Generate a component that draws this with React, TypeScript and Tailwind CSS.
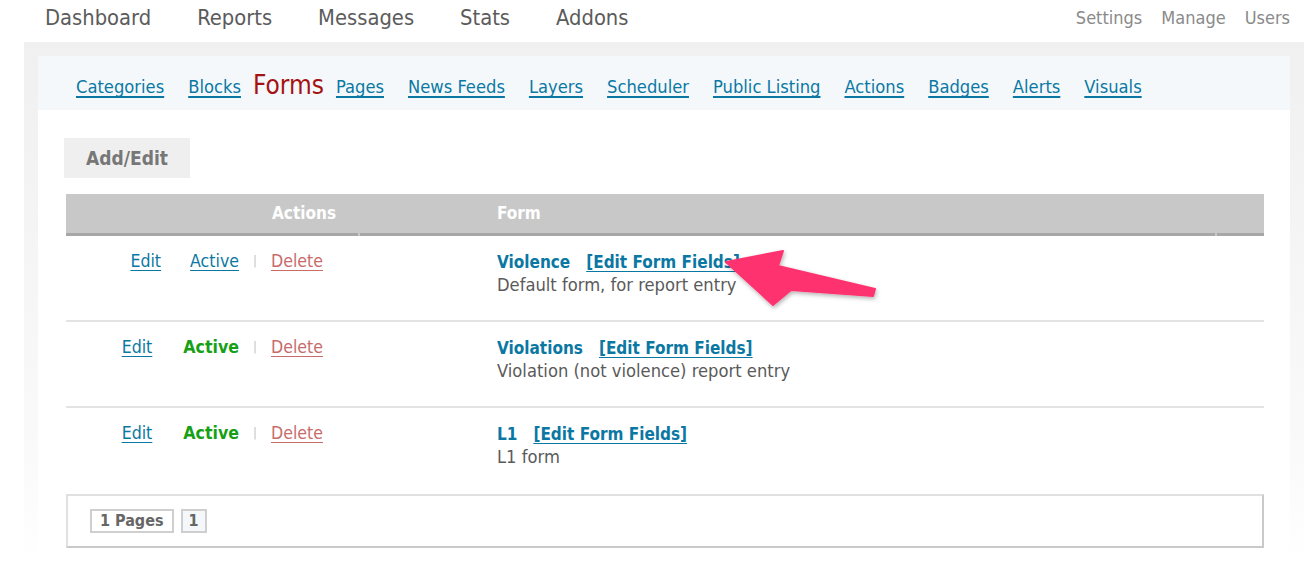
import React from "react";

const F = { fontFamily: "'DejaVu Sans Condensed', 'DejaVu Sans', sans-serif", fontStretch: "condensed" as const };

const sub = ["Categories", "Blocks", "Forms", "Pages", "News Feeds", "Layers", "Scheduler", "Public Listing", "Actions", "Badges", "Alerts", "Visuals"];

const rows = [
  { name: "Violence", desc: "Default form, for report entry", green: false },
  { name: "Violations", desc: "Violation (not violence) report entry", green: true },
  { name: "L1", desc: "L1 form", green: true },
];

export default function App() {
  return (
    <div className="relative w-[1304px] h-[564px] overflow-hidden bg-white" style={F}>
      <header className="flex h-[42px] items-start justify-between pl-[45px] pr-[14px] pt-[2px]">
        <nav className="flex gap-[46px] text-[21.75px] leading-[32px] text-[#5b5b5b]">
          <span>Dashboard</span>
          <span>Reports</span>
          <span>Messages</span>
          <span>Stats</span>
          <span>Addons</span>
        </nav>
        <nav className="flex gap-[19px] text-[18px] leading-[32px] text-[#8a8a8a]">
          <span>Settings</span>
          <span>Manage</span>
          <span>Users</span>
        </nav>
      </header>
      <div className="ml-[24px] h-[522px] bg-gradient-to-b from-[#f0f0f0] via-[#fafafa] via-80% to-white pl-[14px] pr-[14px] pt-[14px]">
        <div className="h-[508px] bg-white">
          <div className="flex h-[54px] items-center gap-[24px] bg-[#f4f8fb] pl-[38px] pt-[8px]">
            {sub.map((s) =>
              s === "Forms" ? (
                <span key={s} className="-mx-[12px] -mt-[4px] text-[26px] text-[#a51212]">{s}</span>
              ) : (
                <a key={s} className="text-[18.2px] text-[#0b78a3] underline decoration-2 underline-offset-[3px]">{s}</a>
              )
            )}
          </div>
          <div className="pl-[26px] pt-[28px]">
            <div className="flex h-[40px] w-[126px] items-center justify-center bg-[#efefef] text-[19px] font-bold text-[#777]">
              Add/Edit
            </div>
            <div className="ml-[2px] mt-[16px] w-[1198px]">
              <div className="flex h-[42px] bg-[#c8c8c8] text-[17px] font-bold text-white">
                <div className="flex w-[292px] items-center justify-end border-b-[3px] border-[#a7a7a7] pr-[22px] mr-[2px]">Actions</div>
                <div className="flex w-[855px] items-center border-b-[3px] border-[#a7a7a7] pl-[137px] mr-[2px]">Form</div>
                <div className="w-[47px] border-b-[3px] border-[#a7a7a7]"></div>
              </div>
              {rows.map((r, i) => (
                <div key={r.name} className={"flex h-[86px] " + (i < 2 ? "border-b-2 border-[#e3e3e3]" : "")}>
                  <div className="flex w-[292px] justify-end pr-[35px] pt-[12px] text-[17.6px]">
                    <a className="text-[#0b78a3] underline decoration-1 underline-offset-[3px]">Edit</a>
                    {r.green ? (
                      <span className="ml-[31px] font-bold text-[#16a016]">Active</span>
                    ) : (
                      <a className="ml-[29px] text-[#0b78a3] underline decoration-1 underline-offset-[3px]">Active</a>
                    )}
                    <span className="mx-[14px] pt-[3px] text-[13px] text-[#c4c4c4]">|</span>
                    <a className="text-[#c76b6b] underline decoration-1 underline-offset-[3px]">Delete</a>
                  </div>
                  <div className="pl-[139px] pt-[15px]">
                    <div className="flex text-[17px] leading-[22px]">
                      <span className="font-bold text-[#0b78a3]">{r.name}</span>
                      <a className="ml-[16px] font-semibold text-[#0b78a3] underline decoration-1 underline-offset-[3px]">[Edit Form Fields]</a>
                    </div>
                    <div className="text-[18.2px] leading-[24px] text-[#5a5a5a]">{r.desc}</div>
                  </div>
                </div>
              ))}
              <div className="flex h-[54px] items-center gap-[7px] border-2 border-[#e0e0e0] border-r-[#c9c9c9] border-b-[#c9c9c9] pl-[22px]">
                <span className="flex h-[24px] items-center border-2 border-[#cfcfcf] bg-white px-[8px] text-[16px] font-bold text-[#666]">1 Pages</span>
                <span className="flex h-[24px] items-center border-2 border-[#cfcfcf] bg-[#f4f8fb] px-[6px] text-[16px] font-bold text-[#666]">1</span>
              </div>
            </div>
          </div>
        </div>
      </div>
      <svg className="pointer-events-none absolute left-0 top-0" width="1304" height="564">
        <defs>
          <filter id="sh" x="-20%" y="-20%" width="140%" height="140%">
            <feDropShadow dx="1" dy="2" stdDeviation="2" floodColor="#000" floodOpacity="0.3" />
          </filter>
        </defs>
        <polygon
          points="726,262 783,251 778,266 875,289 873,296 791,290 773,305"
          fill="#ff3370"
          stroke="#ff3370"
          strokeWidth="2"
          strokeLinejoin="round"
          filter="url(#sh)"
        />
      </svg>
    </div>
  );
}
